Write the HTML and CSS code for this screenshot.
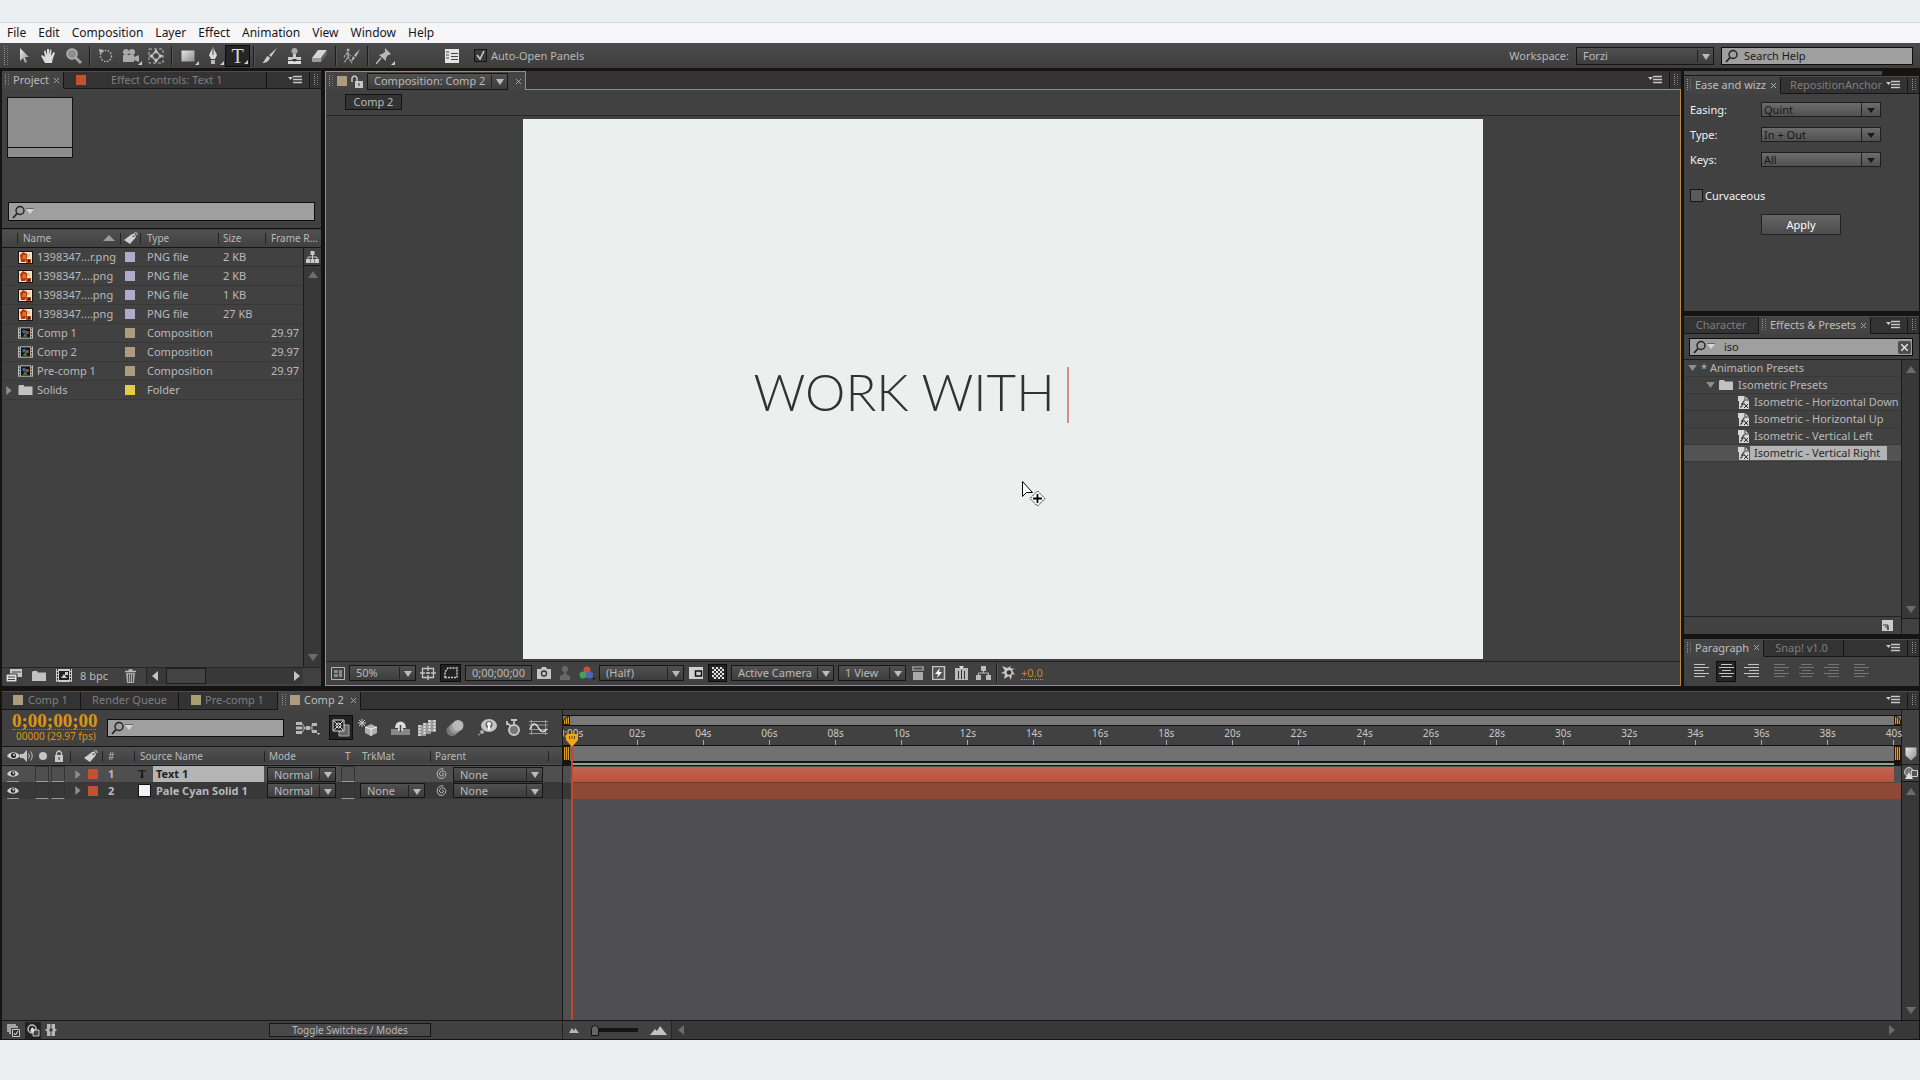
FILE: index.html
```html
<!DOCTYPE html>
<html lang="en">
<head>
<meta charset="utf-8">
<title>Comp 2</title>
<link rel="stylesheet" href="styles.css">
</head>
<body>
<svg class="sprite" width="0" height="0" aria-hidden="true">
  <defs>
    <linearGradient id="metal" x1="0" y1="0" x2="1" y2="1"><stop offset="0" stop-color="#e8e8e8"/><stop offset="1" stop-color="#8c8c8c"/></linearGradient>
  </defs>
  <symbol id="i-menu" viewBox="0 0 14 10"><path d="M0 2h5L2.500 5z" fill="#c8c8c8"/><path d="M5 1.500h9M5 4.500h9M5 7.500h9" stroke="#c8c8c8" stroke-width="1.500"/></symbol>
  <symbol id="i-close" viewBox="0 0 7 7"><path d="M1 1l5 5M6 1L1 6" stroke="#a9a9a9" fill="none"/></symbol>
  <symbol id="i-search" viewBox="0 0 22 14"><circle cx="8" cy="5.500" r="4" fill="none" stroke="#222" stroke-width="1.400"/><path d="M5 8.500L1 13" stroke="#222" stroke-width="1.800"/><path d="M14 4h8l-4 5z" fill="#d4d4d4"/><path d="M14 3.500h8" stroke="#666"/></symbol>
  <symbol id="i-search-plain" viewBox="0 0 14 14"><circle cx="8" cy="5.500" r="4" fill="none" stroke="#222" stroke-width="1.400"/><path d="M5 8.500L1 13" stroke="#222" stroke-width="1.800"/></symbol>
  <symbol id="i-tag" viewBox="0 0 15 14"><path d="M1 9L9 3l3 0 1 3-6 7z" fill="#d0d0d0"/><circle cx="10.500" cy="5" r="1" fill="#333"/><path d="M10.500 5c0-4 4-5 3.500-1" fill="none" stroke="#d0d0d0"/></symbol>
  <symbol id="i-png" viewBox="0 0 15 13"><path d="M0 0h15v13H0z" fill="#1a1210"/><path d="M1 1h13v11H1z" fill="#f5e3cf"/><path d="M2 4l3-3 4 2 0 4-2 4H3z" fill="#b23a10"/><path d="M5 4h3v4H4z" fill="#e8701c"/><path d="M9 3h3v3H9z" fill="#f0c070"/><path d="M8 8h5v4H8z" fill="#c04a14"/><path d="M10 9h2v2h-2z" fill="#26160e"/></symbol>
  <symbol id="i-comp" viewBox="0 0 16 12"><path d="M0 0h16v12H0z" fill="#c6c6c6"/><path d="M3 1h10v10H3z" fill="#151515"/><path d="M1.500 0v12M14.500 0v12" stroke="#333" stroke-dasharray="2 1"/><circle cx="6.500" cy="4.500" r="2" fill="#2b6fa8"/><path d="M8.500 4h3v3h-3z" fill="#a8542e"/><path d="M5 10l3-4 2 4z" fill="#3a8a4a"/></symbol>
  <symbol id="i-folder" viewBox="0 0 14 12"><path d="M0 2l1-1h4l1 1.500h8V11H0z" fill="#c2c2c2"/></symbol>
  <symbol id="i-tree" viewBox="0 0 13 12"><path d="M4.500 0h4v4h-4zM0 8h4v4H0zM4.500 8h4v4h-4zM9 8h4v4H9z" fill="#c8c8c8"/><path d="M2 8V6h9v2M6.500 4v4" stroke="#c8c8c8" fill="none"/></symbol>
  <symbol id="i-flow" viewBox="0 0 15 14"><path d="M5 0h5v5H5zM0 9h5v5H0zM10 9h5v5h-5z" fill="#bdbdbd"/><path d="M2.500 9V7h10v2M7.500 5v2" stroke="#bdbdbd" fill="none"/></symbol>
  <symbol id="i-fx" viewBox="0 0 12 13"><path d="M0 0h7l4 4v9H1V5H0z" fill="#d6d6d6"/><path d="M7 0v4h4" stroke="#444" fill="none"/><path d="M2 11l1.500 0 2-6 1.500 0M3 8h4M6.500 8l3.500 4M10 8l-4 4" stroke="#222" fill="none"/></symbol>
  <symbol id="i-eye" viewBox="0 0 13 9"><path d="M0 5C3 0 10 0 13 5 10 9 3 9 0 5z" fill="#cfcfcf"/><circle cx="6.500" cy="4.500" r="2.500" fill="#222"/><circle cx="7" cy="4" r="1" fill="#ddd"/></symbol>
  <symbol id="i-speaker" viewBox="0 0 14 12"><path d="M0 4h3l4-4v12L3 8H0z" fill="#c2c2c2"/><path d="M8.500 3.500q2 2.500 0 5M10.500 1.500q3.500 4.500 0 9" stroke="#c2c2c2" fill="none"/></symbol>
  <symbol id="i-lock" viewBox="0 0 8 12"><path d="M0 5h8v7H0z" fill="#c8c8c8"/><path d="M1.500 5V3q2.500-4 5 0v2" stroke="#c8c8c8" stroke-width="1.300" fill="none"/><path d="M3.500 7h1v3h-1z" fill="#333"/></symbol>
  <symbol id="i-unlock" viewBox="0 0 12 13"><path d="M4 6h8v7H4z" fill="#c8c8c8"/><path d="M1 7V3q2.500-4 5 0v3" stroke="#c8c8c8" stroke-width="1.500" fill="none"/><path d="M7.500 8h1v3h-1z" fill="#333"/></symbol>
  <symbol id="i-spiral" viewBox="0 0 12 12"><path d="M6 6q1-1.500 1.500 0 0 2-2 2-2.500-.5-2-3Q5 2 8 3q3 2 1.500 5Q7 12 3 10 0 7 1.500 3.500 4 0 7.500.8" fill="none" stroke="#b8b8b8"/></symbol>
  <symbol id="i-left" viewBox="0 0 6 10"><path d="M6 0v10L0 5z" fill="currentColor"/></symbol>
  <symbol id="i-right" viewBox="0 0 6 10"><path d="M0 0v10l6-5z" fill="currentColor"/></symbol>
  <symbol id="i-up" viewBox="0 0 10 7"><path d="M0 7h10L5 0z" fill="currentColor"/></symbol>
  <symbol id="i-down" viewBox="0 0 10 7"><path d="M0 0h10L5 7z" fill="currentColor"/></symbol>
  <symbol id="i-al" viewBox="0 0 15 14"><path d="M0 .5h11M0 3.500h15M0 6.500h10M0 9.500h15M0 12.500h11" stroke="currentColor"/></symbol>
  <symbol id="i-ac" viewBox="0 0 15 14"><path d="M2 .5h11M0 3.500h15M3 6.500h9M0 9.500h15M2 12.500h11" stroke="currentColor"/></symbol>
  <symbol id="i-ar" viewBox="0 0 15 14"><path d="M4 .5h11M0 3.500h15M5 6.500h10M0 9.500h15M4 12.500h11" stroke="currentColor"/></symbol>
</svg>

<div class="app">
  <nav class="menubar">
    <a href="#">File</a><a href="#">Edit</a><a href="#">Composition</a><a href="#">Layer</a><a href="#">Effect</a><a href="#">Animation</a><a href="#">View</a><a href="#">Window</a><a href="#">Help</a>
  </nav>

  <header class="toolbar">
    <span class="grip"></span>
    <div class="tools">
      <button class="tool" aria-label="Selection"><svg width="10" height="16" viewBox="0 0 10 16"><path d="M1 0v13l3-3 2 5 2-1-2-5h4z" fill="url(#metal)"/></svg></button>
      <button class="tool" aria-label="Hand"><svg width="16" height="16" viewBox="0 0 16 16"><path d="M4 15L0 8l1-1 3 2L3 3l1.500-.5L6 7V1h2v6l1-5.500 1.500.5L10 8l2.500-4 1.500.8-2.500 7L11 15z" fill="#dcdcdc"/></svg></button>
      <button class="tool" aria-label="Zoom"><svg width="16" height="16" viewBox="0 0 16 16"><path d="M9 9l6 6" stroke="#a0a0a0" stroke-width="3"/><circle cx="6" cy="6" r="5" fill="#8e8e8e" stroke="#b5b5b5" stroke-width="1.500"/></svg></button>
      <i class="sep"></i>
      <button class="tool" aria-label="Rotation"><svg width="14" height="14" viewBox="0 0 14 14"><circle cx="7" cy="7" r="5.500" fill="none" stroke="#b5b5b5" stroke-width="1.500" stroke-dasharray="1.500 1.500"/><path d="M0 0l5 1-4 4z" fill="#b5b5b5"/></svg></button>
      <button class="tool more" aria-label="Camera"><svg width="18" height="14" viewBox="0 0 18 14"><path d="M1 6h11v7H1zM12 8l5-2v7l-5-2z" fill="#aaa"/><circle cx="4" cy="3" r="3" fill="#aaa"/><circle cx="10" cy="3" r="3" fill="#aaa"/></svg></button>
      <button class="tool" aria-label="Pan Behind"><svg width="16" height="16" viewBox="0 0 16 16"><path d="M1 1h14v14H1z" fill="none" stroke="#bbb" stroke-dasharray="3 2"/><circle cx="8" cy="8" r="3.500" fill="none" stroke="#bbb" stroke-width="1.500"/><path d="M8 1l2 3H6zM8 15l2-3H6zM1 8l3-2v4zM15 8l-3-2v4z" fill="#ccc"/></svg></button>
      <i class="sep"></i>
      <button class="tool more" aria-label="Rectangle"><svg width="14" height="12" viewBox="0 0 14 12"><path d="M.5.5h13v11H.5z" fill="url(#metal)"/></svg></button>
      <button class="tool more" aria-label="Pen"><svg width="10" height="17" viewBox="0 0 10 17"><path d="M5 0l4 8-2 4H3L1 8z" fill="#d8d8d8"/><path d="M5 1v7" stroke="#444"/><path d="M3 13h4v4H3z" fill="#bbb"/></svg></button>
      <button class="tool more on type" aria-label="Type">T</button>
      <i class="sep"></i>
      <button class="tool" aria-label="Brush"><svg width="16" height="15" viewBox="0 0 16 15"><path d="M15 0L7 7l2 2zM6 8l2 2c-1 3-4 5-8 5 3-1 3-6 6-7z" fill="#ccc"/></svg></button>
      <button class="tool" aria-label="Clone Stamp"><svg width="15" height="16" viewBox="0 0 15 16"><circle cx="7.500" cy="3" r="3" fill="#aaa"/><path d="M6 6h3v3h5v3H1V9h5z" fill="#ccc"/><path d="M1 13h13v3H1z" fill="#ddd"/><path d="M5 11h5l-2.500 3z" fill="#333"/></svg></button>
      <button class="tool" aria-label="Eraser"><svg width="16" height="12" viewBox="0 0 16 12"><path d="M6 0h9L9 8H0z" fill="#d5d5d5"/><path d="M0 8h9v4H0z" fill="#999"/><path d="M9 8l6-8v4l-6 8z" fill="#666"/></svg></button>
      <i class="sep"></i>
      <button class="tool" aria-label="Roto Brush"><svg width="18" height="16" viewBox="0 0 18 16"><circle cx="5" cy="2" r="1.500" fill="#aaa"/><path d="M5 4v5l-4 6M5 9l4 6M1 9l3-4 4 3" stroke="#aaa" stroke-width="1.500" fill="none" stroke-dasharray="2 1"/><path d="M17 1l-6 6 2 2zM10 8l2 2-4 4z" fill="#bbb"/></svg></button>
      <i class="sep"></i>
      <button class="tool more" aria-label="Puppet Pin"><svg width="16" height="16" viewBox="0 0 16 16"><path d="M9 0l6 6-2 1-1 0-2 3 0 3-7-6 3-1 3-2V1z" fill="#b8b8b8"/><path d="M5 10l-5 6" stroke="#b8b8b8" stroke-width="1.500"/></svg></button>
    </div>
    <button class="tool" aria-label="Toggle panels"><svg width="14" height="14" viewBox="0 0 14 14"><path d="M0 0h14v14H0z" fill="#e4e4e4"/><path d="M1 3h3M1 6h3M1 9h3M6 4.500h7M6 7.500h7M6 10.500h7" stroke="#444"/></svg></button>
    <label class="auto"><input type="checkbox" class="check" checked>Auto-Open Panels</label>
    <label class="ws" for="workspace">Workspace:</label>
    <select id="workspace" class="sel ws-sel"><option>Forzi</option></select>
    <div class="field help"><svg width="14" height="14"><use href="#i-search-plain"/></svg><input type="text" aria-label="Search Help" value="Search Help"></div>
  </header>

  <main class="upper">
    <section class="panel project">
      <div class="tabs">
        <div class="tab on"><span class="grip"></span>Project<svg class="x" width="7" height="7"><use href="#i-close"/></svg></div>
        <div class="tab ec"><span class="sw red"></span><span>Effect Controls: Text 1</span></div>
        <button class="pm" aria-label="Panel menu"><svg width="14" height="10"><use href="#i-menu"/></svg></button><span class="pg"><span class="grip"></span></span>
      </div>
      <div class="preview"><div class="thumb"></div></div>
      <div class="field psearch"><svg width="22" height="14"><use href="#i-search"/></svg><input type="text" aria-label="Search project"></div>
      <div class="items">
        <table class="ptable">
          <colgroup><col class="p0"><col class="p1"><col class="p2"><col class="p3"><col class="p4"><col></colgroup>
          <thead><tr><th></th><th class="sorted"><div>Name<svg class="dim" width="12" height="6" viewBox="0 0 10 7" preserveAspectRatio="none"><path d="M0 7h10L5 0z" fill="#9a9a9a"/></svg></div></th><th><svg width="15" height="14"><use href="#i-tag"/></svg></th><th>Type</th><th>Size</th><th>Frame R...</th></tr></thead>
          <tbody>
            <tr><td></td><td><div><svg width="15" height="13"><use href="#i-png"/></svg>1398347...r.png</div></td><td><span class="sw lav"></span></td><td>PNG file</td><td>2 KB</td><td></td></tr>
            <tr><td></td><td><div><svg width="15" height="13"><use href="#i-png"/></svg>1398347....png</div></td><td><span class="sw lav"></span></td><td>PNG file</td><td>2 KB</td><td></td></tr>
            <tr><td></td><td><div><svg width="15" height="13"><use href="#i-png"/></svg>1398347....png</div></td><td><span class="sw lav"></span></td><td>PNG file</td><td>1 KB</td><td></td></tr>
            <tr><td></td><td><div><svg width="15" height="13"><use href="#i-png"/></svg>1398347....png</div></td><td><span class="sw lav"></span></td><td>PNG file</td><td>27 KB</td><td></td></tr>
            <tr><td></td><td><div><svg width="15" height="12"><use href="#i-comp"/></svg>Comp 1</div></td><td><span class="sw tan"></span></td><td>Composition</td><td></td><td class="num">29.97</td></tr>
            <tr><td></td><td><div><svg width="15" height="12"><use href="#i-comp"/></svg>Comp 2</div></td><td><span class="sw tan"></span></td><td>Composition</td><td></td><td class="num">29.97</td></tr>
            <tr><td></td><td><div><svg width="15" height="12"><use href="#i-comp"/></svg>Pre-comp 1</div></td><td><span class="sw tan"></span></td><td>Composition</td><td></td><td class="num">29.97</td></tr>
            <tr><td><svg class="tri" width="6" height="9"><use href="#i-right"/></svg></td><td><div><svg width="15" height="12"><use href="#i-folder"/></svg>Solids</div></td><td><span class="sw yel"></span></td><td>Folder</td><td></td><td></td></tr>
          </tbody>
        </table>
        <div class="vscroll"><button aria-label="Flowchart"><svg width="13" height="12"><use href="#i-tree"/></svg></button><svg width="10" height="7"><use href="#i-up"/></svg><span></span><svg width="10" height="7"><use href="#i-down"/></svg></div>
      </div>
      <div class="pfoot">
        <button aria-label="Interpret footage"><svg width="16" height="13" viewBox="0 0 16 13"><path d="M4 0h12v8H4z" fill="#c8c8c8"/><path d="M0 5h11v8H0z" fill="#ddd" stroke="#333"/><path d="M2 8h7M2 10.500h7M6 3h9" stroke="#444"/></svg></button>
        <button aria-label="New folder"><svg width="14" height="12"><use href="#i-folder"/></svg></button>
        <button aria-label="New composition"><svg width="16" height="13" viewBox="0 0 16 13"><path d="M0 0h16v13H0z" fill="#ccc"/><path d="M3 2h10v9H3z" fill="#222"/><path d="M1.500 0v13M14.500 0v13" stroke="#333" stroke-dasharray="2 1"/><path d="M5 9l3-4 3 4z" fill="#ccc"/><path d="M9 3h3v3H9z" fill="#ccc"/></svg></button>
        <button class="bpc">8 bpc</button>
        <button aria-label="Delete"><svg width="11" height="14" viewBox="0 0 11 14"><path d="M1 4h9l-1 10H2z" fill="#aaa"/><path d="M3.500 5v8M5.500 5v8M7.500 5v8" stroke="#555"/><path d="M0 2.500h11M3.500 1h4" stroke="#bbb" stroke-width="1.500"/></svg></button>
        <div class="hscroll"><svg width="6" height="10"><use href="#i-left"/></svg><span></span><svg width="6" height="10"><use href="#i-right"/></svg></div>
      </div>
    </section>

    <section class="viewer">
      <div class="vtabs">
        <div class="vtab"><span class="grip"></span><span class="sw tan"></span><svg width="12" height="13"><use href="#i-unlock"/></svg><select class="sel ctitle" aria-label="Viewer"><option>Composition: Comp 2</option></select><svg class="x" width="7" height="7"><use href="#i-close"/></svg></div>
        <div class="vrest"><button class="pm" aria-label="Panel menu"><svg width="14" height="10"><use href="#i-menu"/></svg></button><span class="pg"><span class="grip"></span></span></div>
      </div>
      <div class="vbody">
        <div class="crumb"><button>Comp 2</button></div>
        <div class="stage">
          <div class="canvas">
            <div class="title">WORK WITH<i class="caret"></i></div>
            <svg class="pointer" width="24" height="26" viewBox="0 0 24 26"><path d="M.5.5v15l4-4h6z" fill="#fff" stroke="#000"/><path d="M15.500 10l7.500 7.500-7.500 7.500L8 17.500z" fill="#fff" stroke="#000" stroke-dasharray="1.500 1"/><path d="M15.500 13v9M11 17.500h9" stroke="#000" stroke-width="1.800"/></svg>
          </div>
        </div>
        <div class="vfoot">
          <button class="w15" aria-label="Preview"><svg width="14" height="13" viewBox="0 0 14 13"><path d="M.5.5h13v12H.5z" fill="none" stroke="#b5b5b5"/><path d="M3 3h4v3H3zM8 3h3v7H8zM3 7h4v3H3z" fill="#8a8a8a"/></svg></button>
          <select class="sel w67" aria-label="Magnification"><option>50%</option></select>
          <button class="w16" aria-label="Guides"><svg width="16" height="15" viewBox="0 0 16 15"><path d="M2.500 2.500h11v9h-11zM8 0v5M8 9v5M0 7h5M11 7h5M6 7h4M8 6v2" fill="none" stroke="#c4c4c4" stroke-width="1.300"/></svg></button>
          <button class="w21 on" aria-label="Mask visibility"><svg width="14" height="12" viewBox="0 0 14 12"><path d="M1 10.500V5l3-4h9v9.500z" fill="none" stroke="#ccc" stroke-width="1.500" stroke-dasharray="2 1"/></svg></button>
          <button class="w67 boxed">0;00;00;00</button>
          <button class="w15" aria-label="Snapshot"><svg width="14" height="12" viewBox="0 0 14 12"><path d="M0 2h4l1-2h4l1 2h4v10H0z" fill="#c4c4c4"/><circle cx="7" cy="6.500" r="2.500" fill="none" stroke="#333" stroke-width="1.300"/></svg></button>
          <button class="w20" aria-label="Show snapshot"><svg width="10" height="14" viewBox="0 0 10 14"><circle cx="5" cy="3" r="3" fill="#686868"/><path d="M4 6h2v2l4 2v4H0v-4l4-2z" fill="#686868"/></svg></button>
          <button class="w16" aria-label="Channels"><svg width="16" height="14" viewBox="0 0 16 14"><circle cx="8" cy="4" r="3.500" fill="#c8503a"/><circle cx="4" cy="9" r="3.500" fill="#44a05a"/><circle cx="10.500" cy="9" r="3.500" fill="#4668c4"/><path d="M13 12h3l0 2z" fill="#111"/></svg></button>
          <select class="sel w85" aria-label="Resolution"><option>(Half)</option></select>
          <button class="w16" aria-label="Region of interest"><svg width="14" height="12" viewBox="0 0 14 12"><path d="M0 0h14v12H0z" fill="#cfcfcf"/><path d="M6.500 4h6v5h-6z" fill="#ccc" stroke="#111" stroke-width="1.500"/></svg></button>
          <button class="w19 on" aria-label="Transparency grid"><svg width="12" height="12" viewBox="0 0 12 12"><path d="M0 0h12v12H0z" fill="#333"/><path d="M0 1h12M0 5h12M0 9h12" stroke="#e0e0e0" stroke-width="2" stroke-dasharray="2 2"/><path d="M2 3h10M2 7h10M2 11h10" stroke="#e0e0e0" stroke-width="2" stroke-dasharray="2 2"/></svg></button>
          <select class="sel w103" aria-label="3D view"><option>Active Camera</option></select>
          <select class="sel w68" aria-label="View layout"><option>1 View</option></select>
          <button class="w16" aria-label="Pixel aspect"><svg width="12" height="14" viewBox="0 0 12 14"><path d="M0 1h12M0 4h12M1 1v3M11 1v3" stroke="#bbb"/><path d="M1 6h10v8H1z" fill="#aaa"/></svg></button>
          <button class="w18" aria-label="Fast previews"><svg width="15" height="14" viewBox="0 0 15 14"><path d="M.5.500h12v13H.5z" fill="#555" stroke="#c4c4c4" stroke-width="1.500"/><path d="M8 2L3 8h3l-1 4 5-6H7z" fill="#fff"/></svg></button>
          <button class="w18" aria-label="Timeline"><svg width="13" height="14" viewBox="0 0 13 14"><path d="M0 2h13v12H0z" fill="#bbb"/><path d="M3.500 5v8M6.500 1v12M9.500 5v8" stroke="#333"/><path d="M4 0h5L6.500 4z" fill="#ddd"/></svg></button>
          <button class="w18" aria-label="Flowchart"><svg width="15" height="14"><use href="#i-flow"/></svg></button>
          <i class="sep"></i>
          <button class="w16" aria-label="Exposure"><svg width="16" height="16" viewBox="0 0 16 16"><path d="M1 1l5 2 4-2-1 2 5 1-3 1 3 5-3-1-1 6-2-4-5 3 1-5-4-1 4-2z" fill="#c8c8c8"/><circle cx="8" cy="7.500" r="2.300" fill="#333"/></svg></button>
          <a class="expo" href="#">+0.0</a>
        </div>
      </div>
    </section>

    <aside class="side">
      <div class="strip"></div>
      <section class="panel ease">
        <div class="tabs">
          <div class="tab on"><span class="grip"></span>Ease and wizz<svg class="x" width="7" height="7"><use href="#i-close"/></svg></div>
          <div class="tab repo"><span>RepositionAnchor</span></div>
          <button class="pm" aria-label="Panel menu"><svg width="14" height="10"><use href="#i-menu"/></svg></button><span class="pg"><span class="grip"></span></span>
        </div>
        <form class="eform">
          <label for="easing">Easing:</label><select id="easing" class="esel"><option>Quint</option></select>
          <label for="etype">Type:</label><select id="etype" class="esel"><option>In + Out</option></select>
          <label for="ekeys">Keys:</label><select id="ekeys" class="esel"><option>All</option></select>
          <label class="curv"><input type="checkbox" class="check">Curvaceous</label>
          <button type="button" class="apply">Apply</button>
        </form>
      </section>
      <section class="panel presets">
        <div class="tabs">
          <div class="tab char">Character</div>
          <div class="tab on"><span class="grip"></span>Effects &amp; Presets<svg class="x" width="7" height="7"><use href="#i-close"/></svg></div>
          <button class="pm" aria-label="Panel menu"><svg width="14" height="10"><use href="#i-menu"/></svg></button><span class="pg"><span class="grip"></span></span>
        </div>
        <div class="field isearch"><svg width="22" height="14"><use href="#i-search"/></svg><input type="text" aria-label="Search presets" value="iso"><button aria-label="Clear"><svg width="9" height="9" viewBox="0 0 7 7"><path d="M1 1l5 5M6 1L1 6" stroke="#eee"/></svg></button></div>
        <div class="tree">
          <div class="tbody">
            <ul>
              <li class="l1"><svg class="tri" width="9" height="6"><use href="#i-down"/></svg>* Animation Presets</li>
              <li class="l2"><svg class="tri" width="9" height="6"><use href="#i-down"/></svg><svg width="14" height="12"><use href="#i-folder"/></svg><span>Isometric Presets</span></li>
              <li class="l3"><svg width="12" height="13"><use href="#i-fx"/></svg><span>Isometric - Horizontal Down</span></li>
              <li class="l3"><svg width="12" height="13"><use href="#i-fx"/></svg><span>Isometric - Horizontal Up</span></li>
              <li class="l3"><svg width="12" height="13"><use href="#i-fx"/></svg><span>Isometric - Vertical Left</span></li>
              <li class="l3 on"><svg width="12" height="13"><use href="#i-fx"/></svg><span>Isometric - Vertical Right</span></li>
            </ul>
            <div class="tfoot"><button aria-label="New preset"><svg width="11" height="11" viewBox="0 0 11 11"><path d="M0 0h11v11H0z" fill="#ccc"/><path d="M1 5h5v5M3 7h3v3" stroke="#333" fill="none"/></svg></button></div>
          </div>
          <div class="vscroll"><svg width="10" height="7"><use href="#i-up"/></svg><span></span><svg width="10" height="7"><use href="#i-down"/></svg><em></em></div>
        </div>
      </section>
      <section class="panel para">
        <div class="tabs">
          <div class="tab on"><span class="grip"></span>Paragraph<svg class="x" width="7" height="7"><use href="#i-close"/></svg></div>
          <div class="tab snap">Snap! v1.0</div>
          <button class="pm" aria-label="Panel menu"><svg width="14" height="10"><use href="#i-menu"/></svg></button><span class="pg"><span class="grip"></span></span>
        </div>
        <div class="aligns">
          <button aria-label="Left"><svg width="15" height="14"><use href="#i-al"/></svg></button><button class="on" aria-label="Center"><svg width="15" height="14"><use href="#i-ac"/></svg></button><button aria-label="Right"><svg width="15" height="14"><use href="#i-ar"/></svg></button>
          <span class="just"><button disabled aria-label="Justify left"><svg width="15" height="14"><use href="#i-al"/></svg></button><button disabled aria-label="Justify center"><svg width="15" height="14"><use href="#i-ac"/></svg></button><button disabled aria-label="Justify right"><svg width="15" height="14"><use href="#i-ar"/></svg></button></span>
          <button disabled aria-label="Justify all"><svg width="15" height="14"><use href="#i-al"/></svg></button>
        </div>
      </section>
    </aside>
  </main>

  <section class="timeline">
    <div class="tabs">
      <div class="tab t1"><span class="sw tan"></span>Comp 1</div>
      <div class="tab t2">Render Queue</div>
      <div class="tab t3"><span class="sw olive"></span>Pre-comp 1</div>
      <div class="tab on"><span class="grip"></span><span class="sw tan"></span>Comp 2<svg class="x" width="7" height="7"><use href="#i-close"/></svg></div>
      <button class="pm" aria-label="Panel menu"><svg width="14" height="10"><use href="#i-menu"/></svg></button><span class="pg"><span class="grip"></span></span>
    </div>
    <div class="tl">
      <div class="layers">
        <div class="ltop">
          <div class="clock"><a href="#">0;00;00;00</a><small>00000 (29.97 fps)</small></div>
          <div class="field lsearch"><svg width="22" height="14"><use href="#i-search"/></svg><input type="text" aria-label="Search layers"></div>
          <button class="flowb" aria-label="Mini-flowchart"><svg width="24" height="14" viewBox="0 0 24 14"><path d="M0 1h6v3H0zM0 5.500h6v3H0zM0 10h6v3H0zM10 5h4v4h-4zM16 2h5v3h-5zM16 9h5v3h-5z" fill="#b8b8b8"/><path d="M6 2.500l3 4.500-3 4.500M6 7h4M14 7h2l0-3.500M16 7v3.500" fill="none" stroke="#b8b8b8"/><path d="M21 12h3l-1.500 2z" fill="#ddd"/></svg></button>
          <button class="on" aria-label="Live update"><svg width="18" height="18" viewBox="0 0 18 18"><path d="M7 6h10v11H7z" fill="#666" stroke="#aaa"/><path d="M1 1h11v11H1z" fill="#222" stroke="#ddd"/><circle cx="6.500" cy="6.500" r="2.500" fill="none" stroke="#ddd"/><path d="M2 2l9 9M11 2l-9 9" stroke="#ddd"/></svg></button>
          <button aria-label="Draft 3D"><svg width="19" height="17" viewBox="0 0 19 17"><path d="M4 0v8M0 4h8M1 1l6 6M7 1L1 7" stroke="#ccc"/><path d="M7 8l6-3 6 3v6l-6 3-6-3z" fill="#b0b0b0"/><path d="M7 8l6 2 6-2M13 10v7" stroke="#eee" fill="none"/></svg></button>
          <button class="gap" aria-label="Shy"><svg width="19" height="14" viewBox="0 0 19 14"><path d="M0 8h19v6H0z" fill="#888"/><path d="M4 7a5 6 0 0 1 11 0h-3v3H7V7z" fill="#ddd"/><path d="M9.500 4v7" stroke="#444" stroke-width="1.500"/></svg></button>
          <button aria-label="Frame blending"><svg width="19" height="16" viewBox="0 0 19 16"><path d="M0 5h8v11H0zM5 3h8v11H5zM10 0h8v12h-8z" fill="#9a9a9a"/><path d="M1.500 5v11M6.500 3v11M11.500 0v12M16.500 0v12" stroke="#ddd" stroke-width="2" stroke-dasharray="2 1"/></svg></button>
          <button aria-label="Motion blur"><svg width="18" height="16" viewBox="0 0 18 16"><circle cx="6" cy="10.500" r="5.500" fill="#777"/><circle cx="9" cy="8" r="5.500" fill="#999"/><circle cx="12" cy="5.500" r="5.500" fill="#b8b8b8"/></svg></button>
          <button class="gap" aria-label="Brainstorm"><svg width="19" height="17" viewBox="0 0 19 17"><ellipse cx="11" cy="6.500" rx="8" ry="6.500" fill="#c4c4c4"/><circle cx="4" cy="13" r="2" fill="#aaa"/><circle cx="1" cy="15.500" r="1" fill="#999"/><circle cx="11" cy="5.500" r="3.500" fill="#666"/><circle cx="11" cy="5" r="2" fill="#fff"/><path d="M10 7h2v4h-2z" fill="#fff"/></svg></button>
          <button class="w24" aria-label="Auto-keyframe"><svg width="15" height="17" viewBox="0 0 15 17"><circle cx="8" cy="11" r="5" fill="#777" stroke="#c4c4c4" stroke-width="2"/><path d="M8 2v4M5 1h6M1 4l4 3M1 2l0 4" stroke="#c4c4c4" stroke-width="1.800"/></svg></button>
          <button aria-label="Graph editor"><svg width="19" height="15" viewBox="0 0 19 15"><path d="M0 1.500h19M0 5h19M0 9.500h19M0 13.500h19M2.500 0v15M16.500 0v15" stroke="#999"/><path d="M1 9q4-9 8-2 4 8 9 2" stroke="#ddd" stroke-width="1.500" fill="none"/></svg></button>
        </div>
        <table class="ltable">
          <colgroup><col class="c0"><col class="c1"><col class="c2"><col class="c3"><col class="c4"><col class="c5"><col class="c6"><col class="c7"><col></colgroup>
          <thead><tr>
            <th><div class="av"><svg width="13" height="9"><use href="#i-eye"/></svg><svg width="14" height="12"><use href="#i-speaker"/></svg><span class="dot"></span><svg width="8" height="12"><use href="#i-lock"/></svg></div></th>
            <th class="bar"><svg width="15" height="14"><use href="#i-tag"/></svg></th><th class="bar">#</th><th class="bar">Source Name</th><th class="bar">Mode</th><th>T</th><th>TrkMat</th><th class="bar">Parent</th><th class="bar"></th>
          </tr></thead>
          <tbody>
            <tr class="r1">
              <td><div class="sws"><span><svg width="12" height="9"><use href="#i-eye"/></svg></span><i></i><b></b><b></b></div></td>
              <td><div class="lab"><svg class="tri" width="6" height="9"><use href="#i-right"/></svg><span class="sw red"></span></div></td>
              <td class="idx">1</td>
              <td><div class="name"><span class="ticon">T</span><strong>Text 1</strong></div></td>
              <td><select class="sel w69" aria-label="Mode"><option>Normal</option></select></td><td><span class="tbox"></span></td><td></td>
              <td><div class="par"><svg width="12" height="12"><use href="#i-spiral"/></svg><select class="sel" aria-label="Parent"><option>None</option></select></div></td><td></td>
            </tr>
            <tr class="r2">
              <td><div class="sws"><span><svg width="12" height="9"><use href="#i-eye"/></svg></span><i></i><b></b><b></b></div></td>
              <td><div class="lab"><svg class="tri" width="6" height="9"><use href="#i-right"/></svg><span class="sw red"></span></div></td>
              <td class="idx">2</td>
              <td><div class="name"><span class="solid"></span><strong>Pale Cyan Solid 1</strong></div></td>
              <td><select class="sel w69" aria-label="Mode"><option>Normal</option></select></td><td><span class="tbox"></span></td><td><select class="sel w65" aria-label="Track matte"><option>None</option></select></td>
              <td><div class="par"><svg width="12" height="12"><use href="#i-spiral"/></svg><select class="sel" aria-label="Parent"><option>None</option></select></div></td><td></td>
            </tr>
          </tbody>
        </table>
      </div>
      <div class="time">
        <div class="nav"><i></i><i></i></div>
        <ol class="ruler"><li>0:00s</li><li>02s</li><li>04s</li><li>06s</li><li>08s</li><li>10s</li><li>12s</li><li>14s</li><li>16s</li><li>18s</li><li>20s</li><li>22s</li><li>24s</li><li>26s</li><li>28s</li><li>30s</li><li>32s</li><li>34s</li><li>36s</li><li>38s</li><li>40s</li></ol>
        <div class="work"><i></i><i></i></div>
        <div class="cache"><i></i></div>
        <div class="track a"><i></i></div>
        <div class="track b"><i></i></div>
        <div class="playhead"><svg width="12" height="13" viewBox="0 0 12 13"><path d="M0 1l1-1h10l1 1v5l-6 7-6-7z" fill="#f0a818"/><path d="M3.500 2v3M6 2v3M8.500 2v3" stroke="#6a4208"/></svg></div>
      </div>
      <div class="tside">
        <div class="marker"><svg width="12" height="14" viewBox="0 0 12 14"><path d="M.5.5h11v8L6 13.500.5 8.500z" fill="url(#metal)"/></svg></div>
        <div class="cbin"><svg width="14" height="12" viewBox="0 0 14 12"><circle cx="5" cy="5" r="4.500" fill="#777" stroke="#ccc"/><path d="M7.500 3.500h6v6h-6z" fill="#555" stroke="#ccc"/><path d="M1 12l4-7 4 7z" fill="#ddd"/></svg></div>
        <div class="vscroll"><svg width="10" height="7"><use href="#i-up"/></svg><span></span><svg width="10" height="7"><use href="#i-down"/></svg></div>
      </div>
    </div>
    <div class="tfootbar">
      <div class="fl">
        <button aria-label="Layer switches"><svg width="14" height="13" viewBox="0 0 14 13"><path d="M1 8V1h8M3 10V3h8" fill="none" stroke="#c4c4c4" stroke-width="1.500"/><path d="M5.500 5.500h7v7h-7z" fill="#333" stroke="#c4c4c4"/><path d="M7 9l1.500 2L11 7" stroke="#eee" fill="none"/></svg></button>
        <button class="on" aria-label="Transfer controls"><svg width="13" height="13" viewBox="0 0 13 13"><circle cx="5" cy="5" r="4" fill="none" stroke="#c4c4c4" stroke-width="1.500"/><path d="M6 6h6v6H6z" fill="#444" stroke="#c4c4c4"/><path d="M5 3l3 3-2 3-3-2z" fill="#ddd"/></svg></button>
        <button aria-label="In and out"><svg width="12" height="12" viewBox="0 0 12 12"><path d="M5.500 0H2v4.500L0 6l2 1.500V12h3.500V8L4 6l1.500-2zM6.500 0H10v4.500L12 6l-2 1.500V12H6.500V8L8 6 6.500 4z" fill="#b8b8b8"/></svg></button>
        <button class="toggle">Toggle Switches / Modes</button>
      </div>
      <div class="fz">
        <svg width="10" height="6" viewBox="0 0 10 6"><path d="M0 6l3-5 2 3 1-3 4 5z" fill="#b8b8b8"/></svg>
        <input type="range" aria-label="Zoom" min="0" max="100" value="0">
        <svg width="17" height="9" viewBox="0 0 17 9"><path d="M0 9l5-6 2 2 3-5 7 9z" fill="#c4c4c4"/></svg>
      </div>
      <div class="fs"><svg width="6" height="10"><use href="#i-left"/></svg><svg width="6" height="10"><use href="#i-right"/></svg></div>
    </div>
  </section>
</div>
</body>
</html>
```
FILE: styles.css
```css
* { box-sizing: border-box; }
body {
  margin: 0;
  background: #ebefef;
  color: #b9b9b9;
  font: 11px/16px "Noto Sans", "Open Sans", sans-serif;
}
button, input, select { font: inherit; color: inherit; margin: 0; }
button { background: none; border: 0; padding: 0; display: flex; align-items: center; justify-content: center; flex: none; }
svg { display: block; flex: none; }
ul, ol { list-style: none; margin: 0; padding: 0; }
a { color: inherit; text-decoration: none; }
.sprite { position: absolute; }

.app { display: flex; flex-direction: column; min-height: 100vh; padding: 22px 0 40px; }

/* menu and tools */
.menubar {
  display: flex; gap: 12px; height: 21px; padding: 0 7px;
  border-top: 1px solid #d5d7da; background: #f6f6f9;
  color: #16161a; font-size: 12px; line-height: 20px;
}
.toolbar {
  display: flex; align-items: center; height: 25px; padding-left: 4px; padding-right: 7px;
  background: linear-gradient(#4b4b4b, #3e3e3e);
}
.tools { display: flex; align-items: center; width: 430px; padding-left: 2px; }
.tool { width: 25px; height: 22px; position: relative; }
.tool.on { background: #252525; border: 1px solid #0c0c0c; }
.tool.more::after {
  content: ""; position: absolute; right: 1px; bottom: 2px;
  border: 2px solid; border-color: transparent #ccc #ccc transparent;
}
.type { font: 20px/20px "Liberation Serif", serif; color: #d8d8d8; }
.sep { flex: none; width: 1px; height: 20px; background: #1c1c1c; margin: 0 3px; box-shadow: 1px 0 #555; }
.grip {
  flex: none; width: 4px; height: 12px;
  background: repeating-linear-gradient(#999 0 1px, transparent 1px 2px) 0 0 / 1px 12px no-repeat,
              repeating-linear-gradient(#777 0 1px, transparent 1px 2px) 3px 0 / 1px 12px no-repeat;
}
.toolbar > .grip { height: 20px; background-size: 1px 20px; margin-right: 1px; }
.auto { display: flex; align-items: center; gap: 4px; margin-left: 10px; flex: 1; }
.check {
  appearance: none; width: 13px; height: 13px; flex: none;
  border: 1px solid #151515; background: #5a5a5a;
}
.check:checked {
  background: #3a3a3a url("data:image/svg+xml,%3Csvg xmlns='http://www.w3.org/2000/svg' viewBox='0 0 11 11'%3E%3Cpath d='M2 5l3 4 4-8' fill='none' stroke='%23ccc' stroke-width='1.500'/%3E%3C/svg%3E");
}
.ws { margin-right: 7px; }
.sel {
  appearance: none; height: 16px; padding: 0 20px 0 6px; line-height: 14px;
  border: 1px solid #161616; border-radius: 0; outline: 0; color: #b9b9b9;
  background:
    url("data:image/svg+xml,%3Csvg xmlns='http://www.w3.org/2000/svg' width='16' height='12'%3E%3Cpath d='M.5 0v12' stroke='%23222'/%3E%3Cpath d='M5 4h8l-4 6z' fill='%23bbb'/%3E%3C/svg%3E") right center no-repeat,
    linear-gradient(#505050, #3d3d3d);
}
.ws-sel { width: 138px; height: 18px; margin-right: 7px; }
.field {
  display: flex; align-items: center; gap: 5px; height: 18px; padding-left: 3px;
  background: #9f9f9f; border: 1px solid #0d0d0d;
}
.field input { flex: 1; min-width: 0; height: 16px; border: 0; padding: 0; background: none; color: #1c1c1c; outline: 0; }
.help { width: 192px; }

/* panels */
.upper {
  display: grid; grid-template-columns: 319px minmax(0, 1fr) 235px; column-gap: 4px;
  padding: 3px 1px 4px 2px; background: #151413;
}
.panel { display: flex; flex-direction: column; background: #424142; min-width: 0; }
.tabs { display: flex; height: 18px; background: #343334; border-top: 1px solid #4c4c4c; flex: none; }
.tab {
  display: flex; align-items: center; flex: none; color: #7e7e7e; white-space: nowrap;
  border-right: 1px solid #141414; border-bottom: 1px solid #161616;
}
.tab.on { background: #454445; color: #bdbdbd; border-bottom-color: #454445; padding: 0 3px; gap: 4px; }
.pm { flex: 1; justify-content: flex-end; padding-right: 7px; border-bottom: 1px solid #161616; }
.pg { width: 12px; display: flex; align-items: center; justify-content: center; border-left: 1px solid #161616; border-bottom: 1px solid #161616; }
.sw { display: inline-block; width: 10px; height: 10px; flex: none; }
.red { background: #c5502f; } .lav { background: #aeabcb; } .tan { background: #ad9c80; }
.olive { background: #aa9f6e; } .yel { background: #e5cb4c; }
.tri { color: #8e8e8e; }

.ec { width: 203px; padding-left: 12px; gap: 25px; }
.preview { padding: 8px 5px 0; height: 113px; }
.thumb { width: 66px; height: 61px; border: 1px solid #111; background: linear-gradient(#8d8d8d 49px, #111 49px 50px, #8d8d8d 50px); }
.psearch { margin: 0 6px 7px 6px; height: 19px; }
.items { position: relative; flex: 1; }
.ptable, .ltable { width: 100%; table-layout: fixed; border-collapse: collapse; }
.p0 { width: 15px; } .p1 { width: 103px; } .p2 { width: 20px; } .p3 { width: 78px; } .p4 { width: 47px; }
th { font-size: 10px; font-weight: 400; text-align: left; padding: 0; white-space: nowrap; }
td { padding: 0; white-space: nowrap; }
th > div, td > div { display: flex; align-items: center; }
.ptable thead tr { height: 19px; background: linear-gradient(#505050, #414141); border-top: 1px solid #111; border-bottom: 1px solid #151515; }
.ptable th + th, .bar { background: linear-gradient(#222, #222) 0 4px / 1px 11px no-repeat; }
.ptable th { padding-left: 6px; }
.ptable th:nth-child(3) { padding-left: 3px; }
.sorted div { justify-content: space-between; padding-right: 5px; }
.ptable tbody tr { height: 19px; border-bottom: 1px solid #393839; }
.ptable td { padding-left: 6px; }
.ptable td:first-child { padding-left: 4px; }
.ptable td:nth-child(2) { padding-left: 1px; }
.ptable td:nth-child(2) div { gap: 4px; }
.ptable td:nth-child(3) { padding-left: 5px; }
.ptable td:nth-child(4), .ptable th:nth-child(4) { padding-left: 7px; }
.ptable td:nth-child(5), .ptable th:nth-child(5) { padding-left: 5px; }
.ptable td:nth-child(3) .sw { display: block; }
.ptable .num { padding-right: 22px; text-align: right; }
.vscroll {
  display: flex; flex-direction: column; align-items: center; width: 18px; gap: 5px;
  padding: 6px 0; background: #393839; border-left: 1px solid #1c1c1c; color: #6c6c6c;
}
.vscroll span { flex: 1; }
.items .vscroll { position: absolute; top: 20px; right: 0; bottom: 0; padding-top: 0; }
.vscroll button { height: 18px; width: 17px; background: #424142; border-bottom: 1px solid #111; }
.pfoot { display: flex; align-items: center; height: 19px; padding: 0 0 2px 4px; gap: 10px; border-top: 1px solid #252525; }
.bpc { margin: 0 7px 0 -2px; }
.hscroll { display: flex; align-items: center; width: 157px; height: 16px; padding: 0 3px 0 5px; background: #393839; border-left: 1px solid #222; color: #c4c4c4; }
.hscroll span { width: 40px; height: 16px; margin: 0 auto 0 8px; border: 1px solid #1c1c1c; background: #444; }

/* viewer */
.viewer { display: flex; flex-direction: column; min-width: 0; margin-right: -1px; }
.vtabs { display: flex; height: 19px; }
.vtab {
  display: flex; align-items: center; gap: 4px; width: 201px; padding: 0 3px;
  background: #454445; border: 1px solid #b98a3c; border-bottom: 0;
}
.ctitle { width: 147px; height: 17px; }
.vtab .x { margin-left: 3px; }
.vrest { flex: 1; display: flex; background: #353235; border-bottom: 1px solid #b98a3c; }
.vrest .pm, .vrest .pg { border-bottom: 0; }
.vbody { flex: 1; display: flex; flex-direction: column; background: #424142; border: 1px solid #b98a3c; border-top: 0; }
.crumb { height: 26px; padding: 4px 19px; border-bottom: 1px solid #252525; }
.crumb button { width: 57px; height: 16px; border: 1px solid #131313; background: #343334; }
.stage { flex: 1; display: flex; align-items: center; justify-content: center; padding: 3px 0 2px; background: #404040; }
.canvas { position: relative; width: 70.9%; aspect-ratio: 16 / 9; background: #ebefee; }
.title {
  position: absolute; left: 24%; top: 45%; display: flex; align-items: center; height: 60px;
  color: #2e3434; font: 300 51px/60px Lato, sans-serif; white-space: nowrap;
}
.caret { width: 2px; height: 56px; margin: 6px 0 0 12px; background: #d58e86; }
.pointer { position: absolute; left: 52%; top: 67%; }
.vfoot { display: flex; align-items: center; gap: 4px; height: 24px; padding-left: 4px; border-top: 1px solid #222; }
.vfoot .sep { margin: 0; }
.w15 { width: 15px; } .w16 { width: 16px; } .w18 { width: 18px; } .w19 { width: 19px; } .w20 { width: 20px; } .w21 { width: 21px; }
.w24 { width: 24px; } .w65 { width: 65px; } .w67 { width: 67px; } .w68 { width: 68px; } .w69 { width: 69px; } .w85 { width: 85px; } .w103 { width: 103px; }
.vfoot .on { height: 18px; background: #222; border: 1px solid #0c0c0c; }
.boxed { height: 16px; border: 1px solid #161616; background: #4a4a4a; }
.expo { color: #c48a22; line-height: 13px; border-bottom: 1px dotted #c48a22; }

/* right column */
.side { display: flex; flex-direction: column; gap: 5px; min-width: 0; }
.strip { height: 4px; width: 198px; background: #4a4a4a; margin-bottom: -4px; }
.ease { height: 235px; }
.repo { flex: 1 1 0; min-width: 0; padding-left: 9px; border-right: 0; }
.repo + .pm { flex: none; padding-left: 4px; }
.eform {
  display: grid; grid-template-columns: 71px 120px; row-gap: 10px; padding: 8px 6px;
  color: #f2f2f2; line-height: 15px;
}
.esel {
  appearance: none; height: 15px; padding: 0 20px 0 2px; line-height: 13px; color: #161616;
  border: 1px solid #1e1e1e; border-radius: 0;
  background:
    url("data:image/svg+xml,%3Csvg xmlns='http://www.w3.org/2000/svg' width='19' height='13'%3E%3Cpath d='M.5 0v13' stroke='%23222'/%3E%3Cpath d='M6 5h8l-4 5z' fill='%23181818'/%3E%3C/svg%3E") right center no-repeat,
    linear-gradient(#6c6c6c, #505050);
}
.curv { grid-column: 1 / 3; display: flex; align-items: center; gap: 2px; margin-top: 11px; }
.apply { grid-column: 2; width: 80px; height: 21px; border: 1px solid #222; background: linear-gradient(#666, #4c4c4c); color: #fff; margin-top: 1px; }
.presets { flex: 1; }
.char { width: 75px; justify-content: center; }
.isearch { margin: 4px 6px 3px 5px; padding-right: 1px; }
.isearch button { width: 13px; height: 13px; background: #4e4e4e; border-radius: 2px; }
.isearch input { padding-left: 4px; }
.tree { flex: 1; display: flex; border-top: 1px solid #1c1c1c; }
.tbody { flex: 1; min-width: 0; display: flex; flex-direction: column; }
.tbody ul { flex: 1; }
.tbody li { display: flex; align-items: center; height: 17px; border-bottom: 1px solid #393839; white-space: nowrap; }
.l1 { padding-left: 4px; gap: 4px; }
.l2 { padding-left: 22px; gap: 4px; } .l2 svg + svg { margin-right: 1px; }
.l3 { padding-left: 54px; }
.l3 span { padding: 0 7px 0 4px; line-height: 14px; }
.l3.on { background: #545354; }
.l3.on span { background: #b4b4b4; color: #2a2a2a; }
.tfoot { display: flex; justify-content: flex-end; align-items: center; height: 18px; padding-right: 8px; border-top: 1px solid #222; }
.tree .vscroll { padding-bottom: 0; }
.tree em { height: 16px; width: 17px; background: #424142; border-top: 1px solid #1c1c1c; }
.snap { width: 80px; padding-left: 11px; }
.aligns { display: flex; align-items: center; height: 29px; padding: 0 7px; gap: 5px; color: #c4c4c4; }
.aligns button { width: 20px; height: 21px; }
.aligns .on { background: #262626; border: 1px solid #0c0c0c; }
.just { display: flex; gap: 5px; margin: 0 5px; }
.aligns button:disabled { color: #757575; }

/* timeline */
.timeline { flex: 1; display: flex; flex-direction: column; background: #151413; padding: 1px 1px 1px 2px; }
.timeline > .tabs { height: 19px; }
.t1 { width: 79px; padding-left: 11px; gap: 5px; }
.t2 { width: 98px; justify-content: center; }
.t3 { width: 99px; padding-left: 12px; gap: 4px; }
.timeline .tab.on { padding-left: 4px; }
.timeline .x { margin-left: 2px; }
.tl { flex: 1; display: flex; background: #424142; }
.layers { width: 561px; border-right: 1px solid #171717; }
.ltop { display: flex; align-items: center; height: 36px; padding-left: 10px; }
.clock { display: flex; flex-direction: column; width: 95px; color: #dd9415; }
.clock a { font: bold 19px/16px "Liberation Serif", serif; width: 84px; border-bottom: 1px dotted #b87a10; }
.clock small { font-size: 10px; line-height: 12px; padding-left: 4px; }
.lsearch { width: 177px; margin-right: 10px; }
.ltop button { width: 27px; height: 25px; }
.ltop .flowb { width: 28px; margin-right: 7px; }
.ltop .on { width: 24px; background: #222; border: 1px solid #0c0c0c; margin-right: 1px; }
.ltop .gap { margin-left: 6px; }
.ltop .w24 { width: 24px; }
.c0 { width: 68px; } .c1 { width: 32px; } .c2 { width: 32px; } .c3 { width: 130px; } .c4 { width: 75px; } .c5 { width: 18px; } .c6 { width: 73px; } .c7 { width: 118px; }
.ltable thead tr { height: 19px; background: linear-gradient(#505050, #414141); border-top: 1px solid #151515; border-bottom: 1px solid #151515; }
.ltable th { padding-left: 6px; }
.ltable th:nth-child(2) { padding-left: 13px; }
.ltable th:nth-child(1), .ltable th:nth-child(7), .ltable th:nth-child(8) { padding-left: 5px; }
.ltable th:nth-child(5) { padding-left: 5px; }
.av { gap: 4px; }
.av svg:first-child { margin-right: -4px; }
.dot { width: 8px; height: 8px; border-radius: 4px; background: #c4c4c4; margin: 0 4px 0 1px; }
.ltable tbody tr { height: 17px; }
.ltable td { height: 17px; line-height: 0; vertical-align: middle; }
.r1 { background: #504f50; }
.r2 { background: #393839; }
.sws { gap: 2px; padding-left: 5px; }
.sws span { width: 12px; height: 16px; display: flex; align-items: center; border-bottom: 1px solid #999; }
.sws i { width: 12px; }
.sws b, .tbox { width: 14px; height: 16px; border: 1px solid #333; border-bottom-color: #999; }
.tbox { display: block; margin-left: 2px; }
.lab { gap: 7px; padding-left: 5px; }
.ltable .idx { padding-left: 6px; font-weight: 700; line-height: 16px; }
.name { gap: 5px; padding-left: 4px; line-height: 16px; }
.ticon { width: 10px; font: bold 12px/16px "Liberation Serif", serif; color: #161616; }
.solid { width: 13px; height: 13px; background: #f2f2f2; border: 1px solid #111; margin-right: -3px; }
.name strong { flex: 1; padding-left: 3px; }
.r1 .name strong { background: #b4b4b4; color: #222; }
.ltable .sel { display: block; height: 15px; margin-left: 3px; line-height: 13px; }
.par { padding-left: 6px; gap: 5px; }
.ltable .par .sel { margin: 0; width: 90px; }
.time {
  position: relative; flex: 1; min-width: 0; padding-top: 5px;
  background: #4f4e50; box-shadow: inset 0 35px #424142; clip-path: inset(0 -4px 0 0);
}
.nav, .work { display: flex; justify-content: space-between; background: #797979; border: 1px solid #111; border-width: 1px 0; }
.nav { height: 11px; } .work { height: 17px; background: #717072; }
.nav i, .work i { width: 7px; margin: 0; border: 1px solid #241503; background: linear-gradient(90deg, #e09a1c 1px, #5a3806 1px 2px, #e09a1c 2px 3px, #5a3806 3px 4px, #e09a1c 4px); }
.nav i:first-child { border-radius: 6px 0 0; } .nav i:last-child { border-radius: 0 6px 0 0; }
.ruler { display: flex; justify-content: space-between; height: 19px; padding: 0 7px 0 8px; font-size: 10px; line-height: 14px; color: #c8c8c8; }
.ruler li { width: 0; display: flex; flex-direction: column; align-items: center; }
.ruler li::after { content: ""; width: 1px; height: 5px; background: #aaa; }
.cache { height: 4px; padding: 1px 7px 1px 8px; background: #151515; }
.cache i { display: block; height: 2px; background: #86a986; }
.track { height: 17px; padding-left: 8px; background: #504f50; }
.track i { display: block; height: 17px; background: #8f4736; }
.track.a { padding-right: 7px; border-top: 1px solid #504f50; }
.track.a i { height: 16px; background: linear-gradient(#c06450, #b9523c); border-bottom: 1px solid #6d3a30; }
.track.b { background: #393839; border-bottom: 1px solid #4f4e50; }
.track.b i { height: 16px; }
.playhead { position: absolute; top: 24px; bottom: 0; left: 8px; width: 2px; background: #c2452c; }
.playhead svg { margin-left: -5px; }
.tside { width: 18px; display: flex; flex-direction: column; padding-top: 35px; border-left: 1px solid #171717; }
.marker, .cbin { height: 20px; display: flex; align-items: center; justify-content: center; border-bottom: 1px solid #171717; }
.cbin { height: 17px; }
.tside .vscroll { flex: 1; border: 0; width: 17px; }
.tfootbar { display: flex; height: 19px; background: #424142; border-top: 1px solid #171717; }
.fl { width: 561px; display: flex; align-items: center; gap: 4px; padding-left: 5px; border-right: 1px solid #222; }
.fl .on { width: 16px; height: 17px; background: #222; }
.toggle { width: 162px; height: 14px; margin-left: 208px; border: 1px solid #161616; background: #4a494a; font-size: 10px; }
.fz { width: 108px; display: flex; align-items: center; gap: 12px; padding-left: 6px; flex: none; }
.fz input { appearance: none; width: 47px; height: 12px; background: linear-gradient(#151515, #151515) 0 4px / 100% 4px no-repeat; }
.fz input::-webkit-slider-thumb { appearance: none; width: 8px; height: 11px; border: 1px solid #111; border-radius: 4px 4px 0 0; background: #666; }
.fs { flex: 1; display: flex; align-items: center; justify-content: space-between; padding: 0 24px 0 6px; background: #393839; color: #6c6c6c; border-left: 1px solid #222; }
```
